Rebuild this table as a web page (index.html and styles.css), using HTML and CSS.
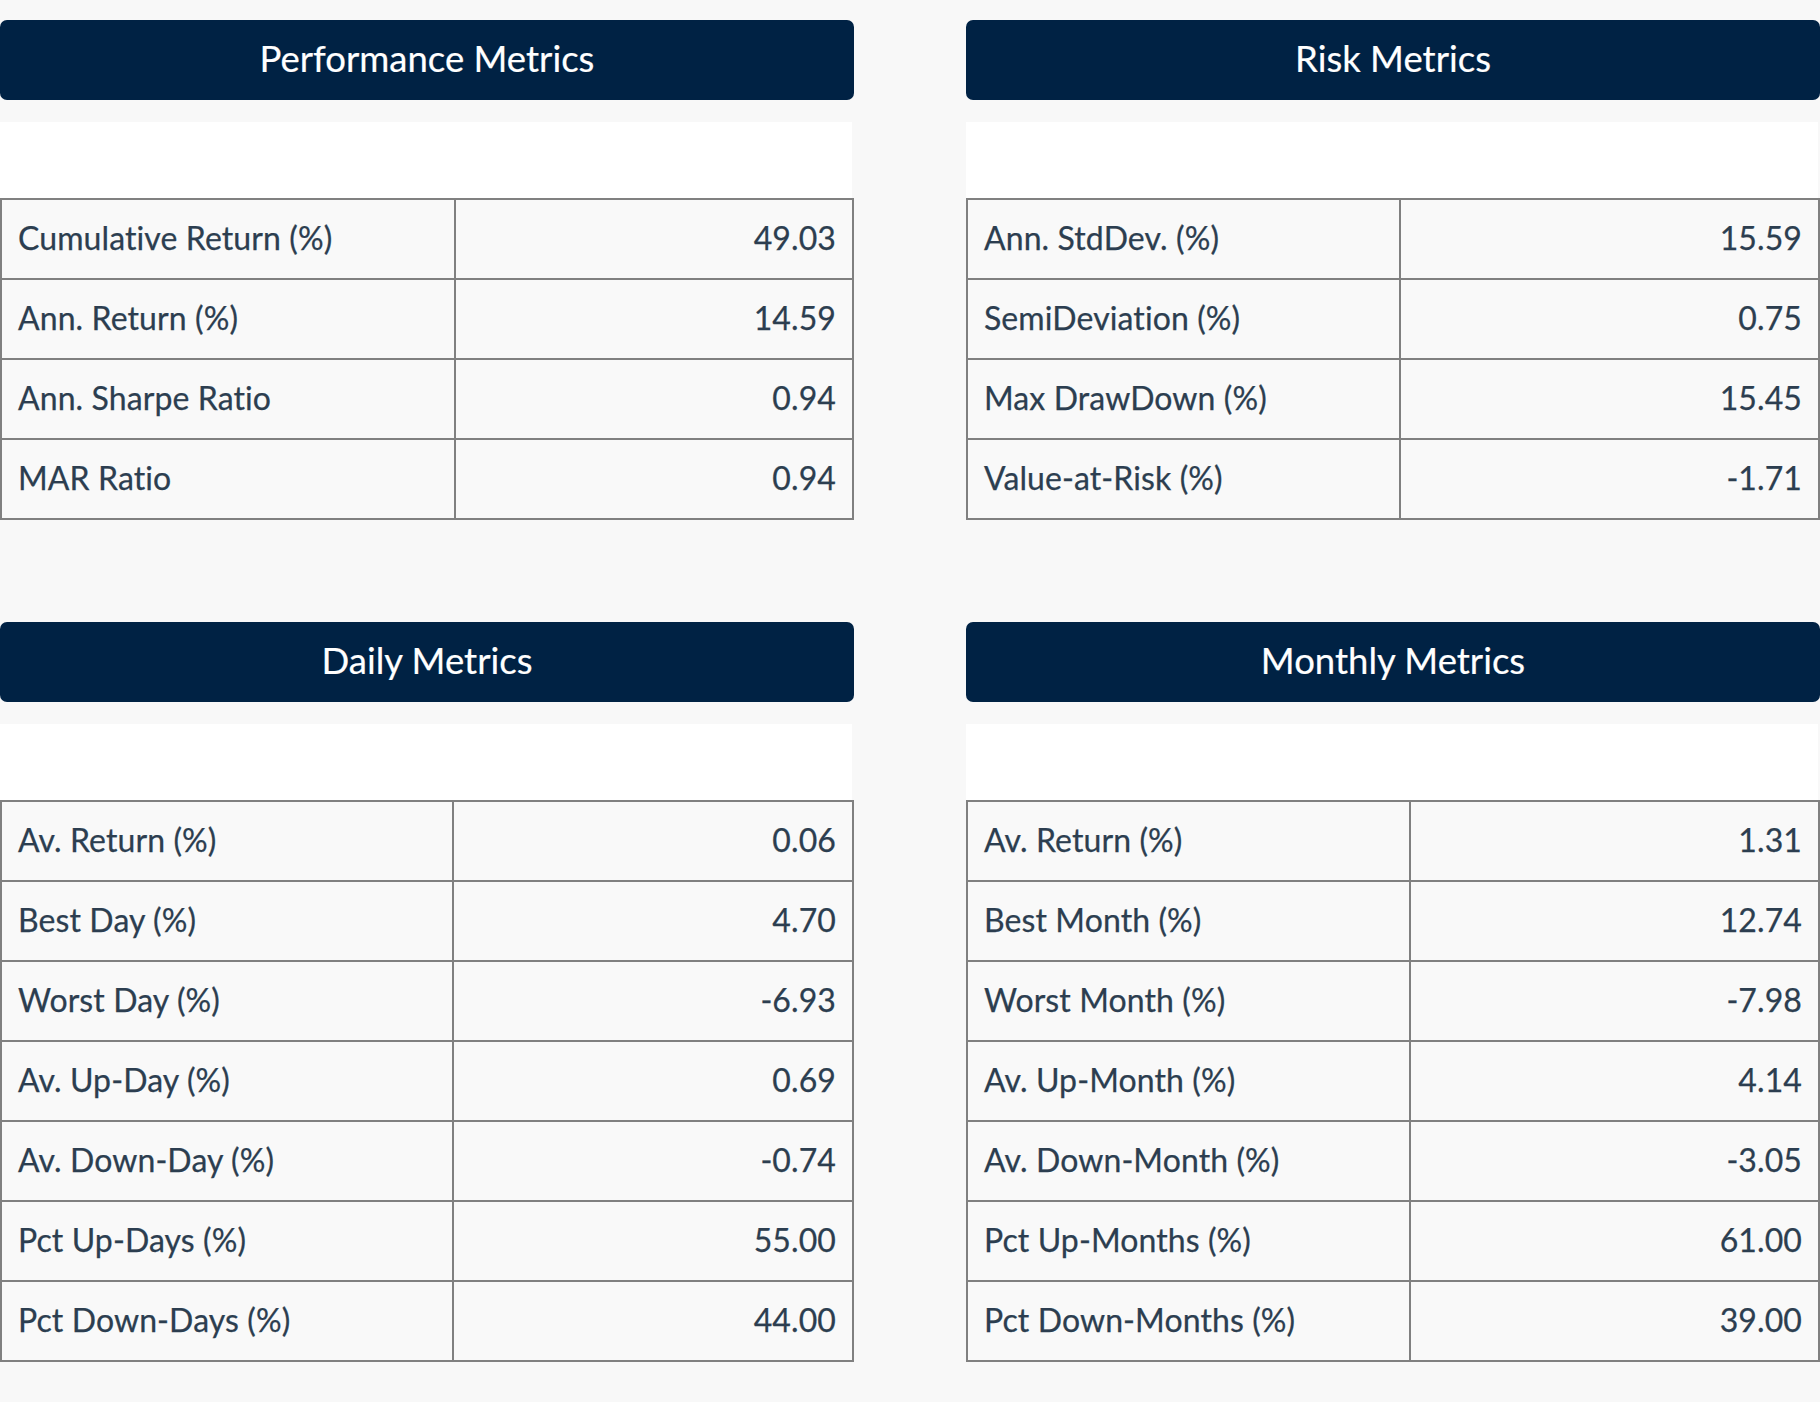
FILE: index.html
```html
<!DOCTYPE html>
<html>
<head>
<meta charset="utf-8">
<link rel="stylesheet" href="styles.css">
</head>
<body>
<div class="page">
  <section class="panel">
    <h2 class="panel-title">Performance Metrics</h2>
    <div class="blank"></div>
    <table class="metrics perf">
      <tr><td class="k">Cumulative Return (%)</td><td class="v">49.03</td></tr>
      <tr><td class="k">Ann. Return (%)</td><td class="v">14.59</td></tr>
      <tr><td class="k">Ann. Sharpe Ratio</td><td class="v">0.94</td></tr>
      <tr><td class="k">MAR Ratio</td><td class="v">0.94</td></tr>
    </table>
  </section>
  <section class="panel">
    <h2 class="panel-title">Risk Metrics</h2>
    <div class="blank"></div>
    <table class="metrics risk">
      <tr><td class="k">Ann. StdDev. (%)</td><td class="v">15.59</td></tr>
      <tr><td class="k">SemiDeviation (%)</td><td class="v">0.75</td></tr>
      <tr><td class="k">Max DrawDown (%)</td><td class="v">15.45</td></tr>
      <tr><td class="k">Value-at-Risk (%)</td><td class="v">-1.71</td></tr>
    </table>
  </section>
  <section class="panel">
    <h2 class="panel-title">Daily Metrics</h2>
    <div class="blank"></div>
    <table class="metrics daily">
      <tr><td class="k">Av. Return (%)</td><td class="v">0.06</td></tr>
      <tr><td class="k">Best Day (%)</td><td class="v">4.70</td></tr>
      <tr><td class="k">Worst Day (%)</td><td class="v">-6.93</td></tr>
      <tr><td class="k">Av. Up-Day (%)</td><td class="v">0.69</td></tr>
      <tr><td class="k">Av. Down-Day (%)</td><td class="v">-0.74</td></tr>
      <tr><td class="k">Pct Up-Days (%)</td><td class="v">55.00</td></tr>
      <tr><td class="k">Pct Down-Days (%)</td><td class="v">44.00</td></tr>
    </table>
  </section>
  <section class="panel">
    <h2 class="panel-title">Monthly Metrics</h2>
    <div class="blank"></div>
    <table class="metrics monthly">
      <tr><td class="k">Av. Return (%)</td><td class="v">1.31</td></tr>
      <tr><td class="k">Best Month (%)</td><td class="v">12.74</td></tr>
      <tr><td class="k">Worst Month (%)</td><td class="v">-7.98</td></tr>
      <tr><td class="k">Av. Up-Month (%)</td><td class="v">4.14</td></tr>
      <tr><td class="k">Av. Down-Month (%)</td><td class="v">-3.05</td></tr>
      <tr><td class="k">Pct Up-Months (%)</td><td class="v">61.00</td></tr>
      <tr><td class="k">Pct Down-Months (%)</td><td class="v">39.00</td></tr>
    </table>
  </section>
</div>
</body>
</html>
```

FILE: styles.css
```css
html, body {
  margin: 0;
  padding: 0;
  background: #f8f8f8;
}

body {
  font-family: Lato, "Open Sans", sans-serif;
  color: #2c3e50;
}

.page {
  display: grid;
  grid-template-columns: 854px 854px;
  column-gap: 112px;
  row-gap: 102px;
  padding-top: 20px;
  width: 1820px;
}

.panel {
  display: flex;
  flex-direction: column;
}

.panel-title {
  box-sizing: border-box;
  margin: 0;
  height: 80px;
  padding-bottom: 4px;
  display: flex;
  align-items: center;
  justify-content: center;
  background: #002244;
  color: #ffffff;
  border-radius: 7px;
  font-size: 36.5px;
  font-weight: 400;
  -webkit-text-stroke: 0.2px #ffffff;
}

.blank {
  height: 76px;
  margin-top: 22px;
  margin-right: 2px;
  background: #ffffff;
}

.metrics {
  width: 854px;
  border-collapse: separate;
  border-spacing: 0;
  table-layout: fixed;
  border: 2px solid #808080;
  border-bottom: none;
  background: #f9f9f9;
}

.metrics td {
  box-sizing: border-box;
  height: 80px;
  padding: 0 16px 2px;
  border-bottom: 2px solid #808080;
  font-size: 32px;
  line-height: 38px;
  vertical-align: middle;
  white-space: nowrap;
  letter-spacing: 0.1px;
  -webkit-text-stroke: 0.25px #2c3e50;
}

.metrics td.k {
  border-right: 2px solid #808080;
  text-align: left;
}

.metrics td.v {
  text-align: right;
}

.perf td.k { width: 454px; }
.risk td.k { width: 433px; }
.daily td.k { width: 452px; }
.monthly td.k { width: 443px; }
```
